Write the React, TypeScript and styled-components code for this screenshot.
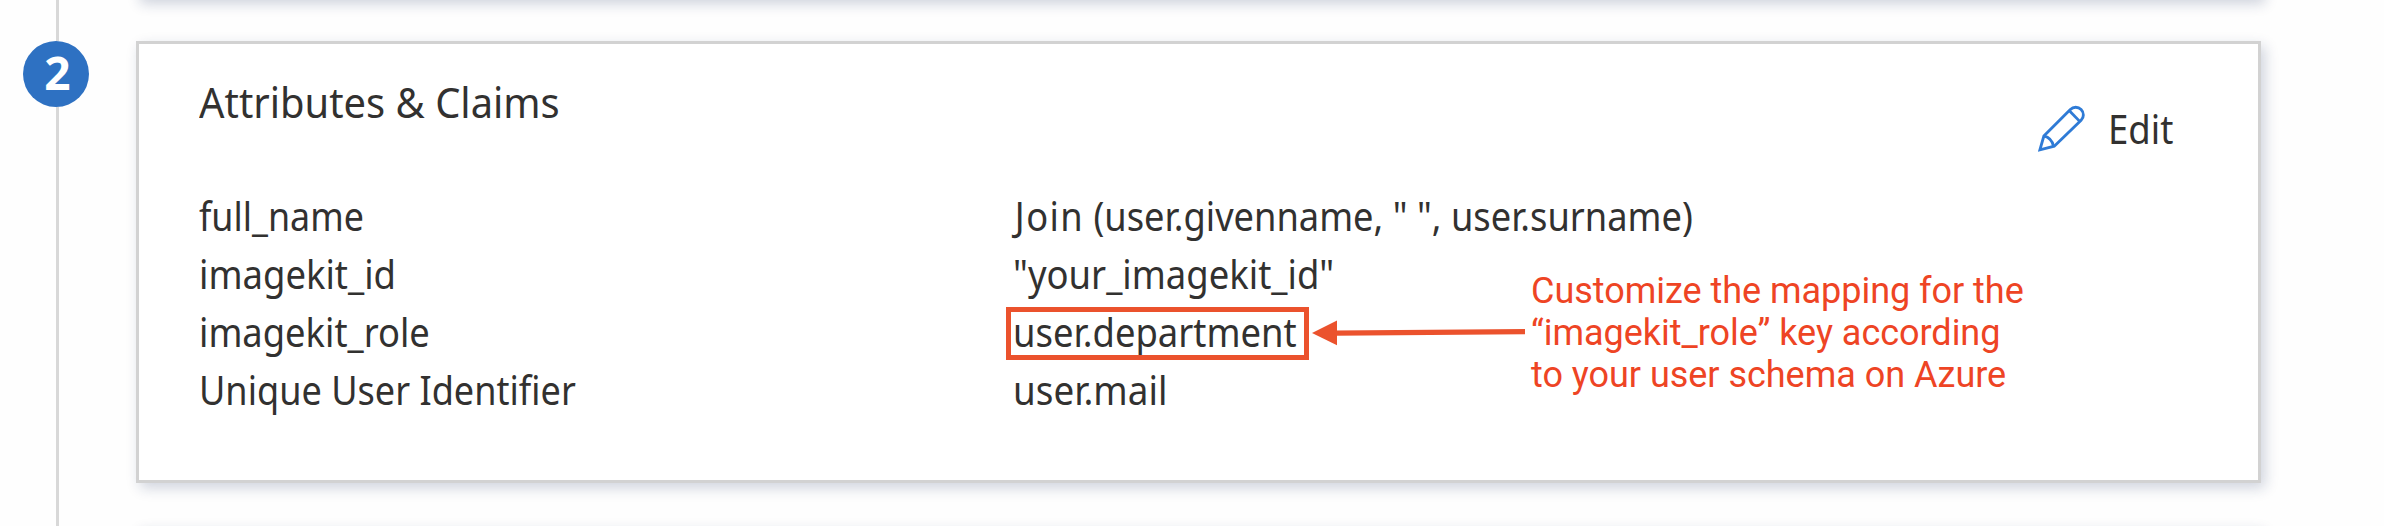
import React from 'react';
import styled, { createGlobalStyle } from 'styled-components';

const GlobalStyle = createGlobalStyle`
  body { margin: 0; background: #fefefe; }
  * { box-sizing: border-box; }
`;

const Page = styled.main`
  display: grid;
  grid-template-columns: 136px 2125px;
  width: 2384px;
  height: 526px;
  overflow: hidden;
  font-family: 'Noto Sans', 'Open Sans', sans-serif;
  color: #323130;
`;

const Rail = styled.div`
  display: flex;
  flex-direction: column;
  align-items: center;
  width: 66px;
  height: 526px;
  margin-left: 23px;
`;

const RailLine = styled.div<{ $length?: number }>`
  width: 3px;
  margin-left: 3px;
  ${p => (p.$length ? `height: ${p.$length}px;` : 'flex: 1;')}
  background: #d8d8d8;
`;

const StepBadge = styled.div`
  width: 66px;
  height: 66px;
  border-radius: 50%;
  background: #2e71c2;
  color: #fff;
  font-size: 46px;
  font-weight: 700;
  line-height: 63px;
  text-align: center;
  padding-left: 3px;
`;

const Stack = styled.div`
  display: flex;
  flex-direction: column;
  height: 526px;
`;

const cardShadow = '4px 5px 13px rgba(20, 40, 90, 0.2)';

const NeighbourEdge = styled.div`
  height: 30px;
  flex: none;
  margin-top: -31px;
  background: #d2d2d2;
  box-shadow: ${cardShadow};
`;

const NextCard = styled.section`
  flex: none;
  height: 60px;
  margin-top: 44px;
  box-shadow: ${cardShadow};
`;

const Card = styled.section`
  flex: none;
  height: 442px;
  margin-top: 42px;
  padding: 29px 79px 0 60px;
  border: 3px solid #d2d2d2;
  background: #fff;
  box-shadow: ${cardShadow};
`;

const CardHeader = styled.header`
  display: flex;
  justify-content: space-between;
  height: 114px;
`;

const Fit = styled.span<{ $scale: number }>`
  display: inline-block;
  white-space: pre;
  transform: scaleX(${p => p.$scale});
  transform-origin: left center;
`;

const Title = styled.h2`
  margin: 0;
  font-size: 41.5px;
  font-weight: 400;
  line-height: 58px;
`;

const EditButton = styled.button`
  display: flex;
  align-items: center;
  gap: 23px;
  width: 141px;
  height: 58px;
  margin: 27px 0 0;
  padding: 0;
  border: 0;
  background: none;
  color: inherit;
  font: 400 39.5px / 58px 'Noto Sans', 'Open Sans', sans-serif;
`;

const Claims = styled.dl`
  display: grid;
  grid-template-columns: 814px 1fr;
  grid-auto-rows: 58px;
  margin: 0;
  font-size: 39.3px;
  line-height: 58px;
`;

const ClaimName = styled.dt`
  padding: 0;
`;

const ClaimValue = styled.dd`
  position: relative;
  margin: 0;
`;

const FunctionName = styled.span`
  margin-left: 2px;
  letter-spacing: 1.5px;
`;

const Highlight = styled.div`
  position: absolute;
  left: -7px;
  top: 4px;
  width: 303px;
  height: 53px;
  border: 5px solid #eb522d;
`;

const Arrow = styled.svg`
  position: absolute;
  left: 299px;
  top: 16px;
`;

const Callout = styled.p`
  position: absolute;
  left: 518px;
  top: -33px;
  margin: 0;
  white-space: pre;
  font-family: Roboto, sans-serif;
  font-size: 36px;
  line-height: 42px;
  letter-spacing: -0.03px;
  color: #ee4424;
`;

const PencilIcon = () => (
  <svg width="50" height="50" viewBox="0 0 50 50" fill="none" stroke="#2f7bd6" strokeWidth="3">
    <path d="M2 47 L6.2 32.4 L34.2 4.4 A8 8 0 0 1 45.6 15.8 L17.2 43.2 Z" />
    <path d="M6.2 32.4 Q14.5 34.5 16.4 43.2" />
    <path d="M33.2 5.6 L43.6 16.4" />
  </svg>
);

const DepartmentNote = () => (
  <>
    <Highlight />
    <Arrow width="216" height="28" viewBox="0 0 216 28" fill="#eb522d">
      <path d="M0 14 L25 1.5 V26.2 Z" />
      <path d="M23 11.5 L213 10 V15.2 L23 16.7 Z" />
    </Arrow>
    <Callout>
      {'Customize the mapping for the\n“imagekit_role” key according\nto your user schema on Azure'}
    </Callout>
  </>
);

type Claim = {
  name: string;
  nameFit: number;
  fn?: string;
  value: string;
  valueFit: number;
  noted?: boolean;
};

const claims: Claim[] = [
  { name: 'full_name', nameFit: 0.912, fn: 'Join', value: ' (user.givenname, " ", user.surname)', valueFit: 0.923 },
  { name: 'imagekit_id', nameFit: 0.928, value: '"your_imagekit_id"', valueFit: 0.928 },
  { name: 'imagekit_role', nameFit: 0.925, value: 'user.department', valueFit: 0.927, noted: true },
  { name: 'Unique User Identifier', nameFit: 0.918, value: 'user.mail', valueFit: 0.937 },
];

export default function App() {
  return (
    <Page>
      <GlobalStyle />
      <Rail>
        <RailLine $length={41} />
        <StepBadge>2</StepBadge>
        <RailLine />
      </Rail>
      <Stack>
        <NeighbourEdge />
        <Card>
          <CardHeader>
            <Title><Fit $scale={0.961}>Attributes &amp; Claims</Fit></Title>
            <EditButton>
              <PencilIcon />
              <Fit $scale={0.925}>Edit</Fit>
            </EditButton>
          </CardHeader>
          <Claims>
            {claims.map(c => (
              <React.Fragment key={c.name}>
                <ClaimName><Fit $scale={c.nameFit}>{c.name}</Fit></ClaimName>
                <ClaimValue>
                  <Fit $scale={c.valueFit}>
                    {c.fn && <FunctionName>{c.fn}</FunctionName>}
                    {c.value}
                  </Fit>
                  {c.noted && <DepartmentNote />}
                </ClaimValue>
              </React.Fragment>
            ))}
          </Claims>
        </Card>
        <NextCard />
      </Stack>
    </Page>
  );
}
